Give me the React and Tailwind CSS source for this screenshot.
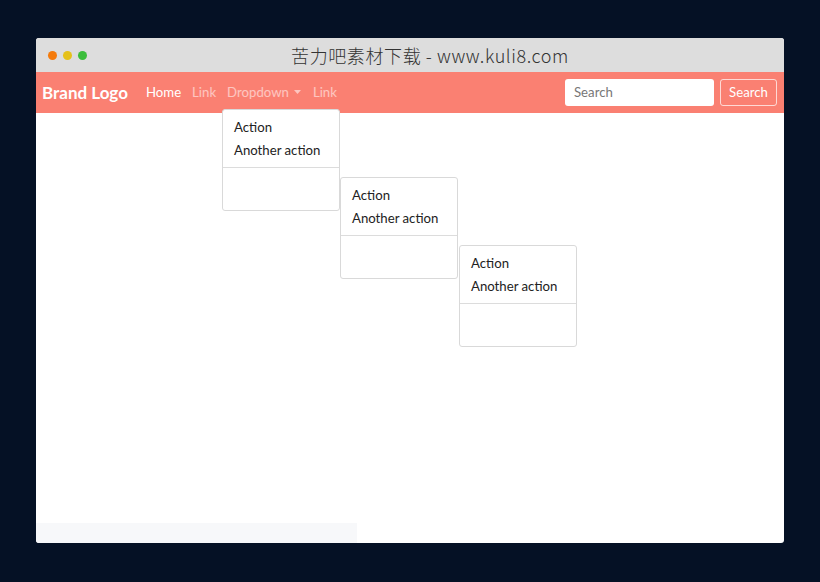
import React from 'react';

const font = { fontFamily: 'Lato, "Noto Sans", "Noto Sans CJK SC", sans-serif' };

function Menu({ className }) {
  return (
    <div
      className={`absolute w-[118px] h-[102px] bg-white border border-[#d9d9d9] rounded-[3px] text-[13.2px] text-[#222] ${className}`}
    >
      <div className="pt-[6px]">
        <div className="h-[23px] leading-[23px] pl-[11px]">Action</div>
        <div className="h-[23px] leading-[23px] pl-[11px]">Another action</div>
      </div>
      <div className="mt-[5px] border-t border-[#dcdcdc]" />
    </div>
  );
}

export default function App() {
  return (
    <div className="w-[820px] h-[582px] bg-[#051125] pt-[38px] pl-[36px]" style={font}>
      <div className="w-[748px] h-[505px] bg-white rounded-[3px] overflow-hidden flex flex-col relative">
        {/* title bar */}
        <div className="h-[34px] bg-[#dddddd] flex items-center relative">
          <div className="flex gap-[6px] pl-[12px]">
            <span className="w-[9px] h-[9px] rounded-full bg-[#f47b0c]" />
            <span className="w-[9px] h-[9px] rounded-full bg-[#e5c11a]" />
            <span className="w-[9px] h-[9px] rounded-full bg-[#3bbd3b]" />
          </div>
          <div
            className="absolute inset-0 flex items-center justify-center pl-[40px] text-[18px] text-[#333] tracking-[0.6px]"
            style={{ fontFamily: '"Noto Sans CJK SC", "Noto Sans", sans-serif', fontWeight: 300 }}
          >
            苦力吧素材下载 - www.kuli8.com
          </div>
        </div>

        {/* navbar */}
        <nav className="h-[41px] bg-[#fa8072] flex items-center pl-[6px] pr-[7px]">
          <span className="text-white font-bold text-[17px] mr-[18px]">Brand Logo</span>
          <div className="flex items-center text-[13.2px]">
            <span className="text-white">Home</span>
            <span className="text-white/55 ml-[11px]">Link</span>
            <span className="text-white/55 flex items-center ml-[11px]">
              Dropdown
              <svg width="7" height="4" viewBox="0 0 7 4" className="ml-[5px]">
                <path d="M0 0 L7 0 L3.5 4 Z" fill="currentColor" />
              </svg>
            </span>
            <span className="text-white/55 ml-[12px]">Link</span>
          </div>
          <div className="ml-auto flex items-center gap-[6px]">
            <div className="w-[149px] h-[27px] bg-white rounded-[3px] flex items-center pl-[9px] text-[13.2px] text-[#777]">
              Search
            </div>
            <button className="w-[57px] h-[27px] border border-white/70 rounded-[3px] text-white text-[13.2px]">
              Search
            </button>
          </div>
        </nav>

        <div className="flex-1 relative">
          <Menu className="left-[186px] top-[-4px]" />
          <Menu className="left-[304px] top-[64px]" />
          <Menu className="left-[423px] top-[132px]" />
          <div className="absolute left-0 bottom-0 w-[321px] h-[20px] bg-[#f7f8fa]" />
        </div>
      </div>
    </div>
  );
}
